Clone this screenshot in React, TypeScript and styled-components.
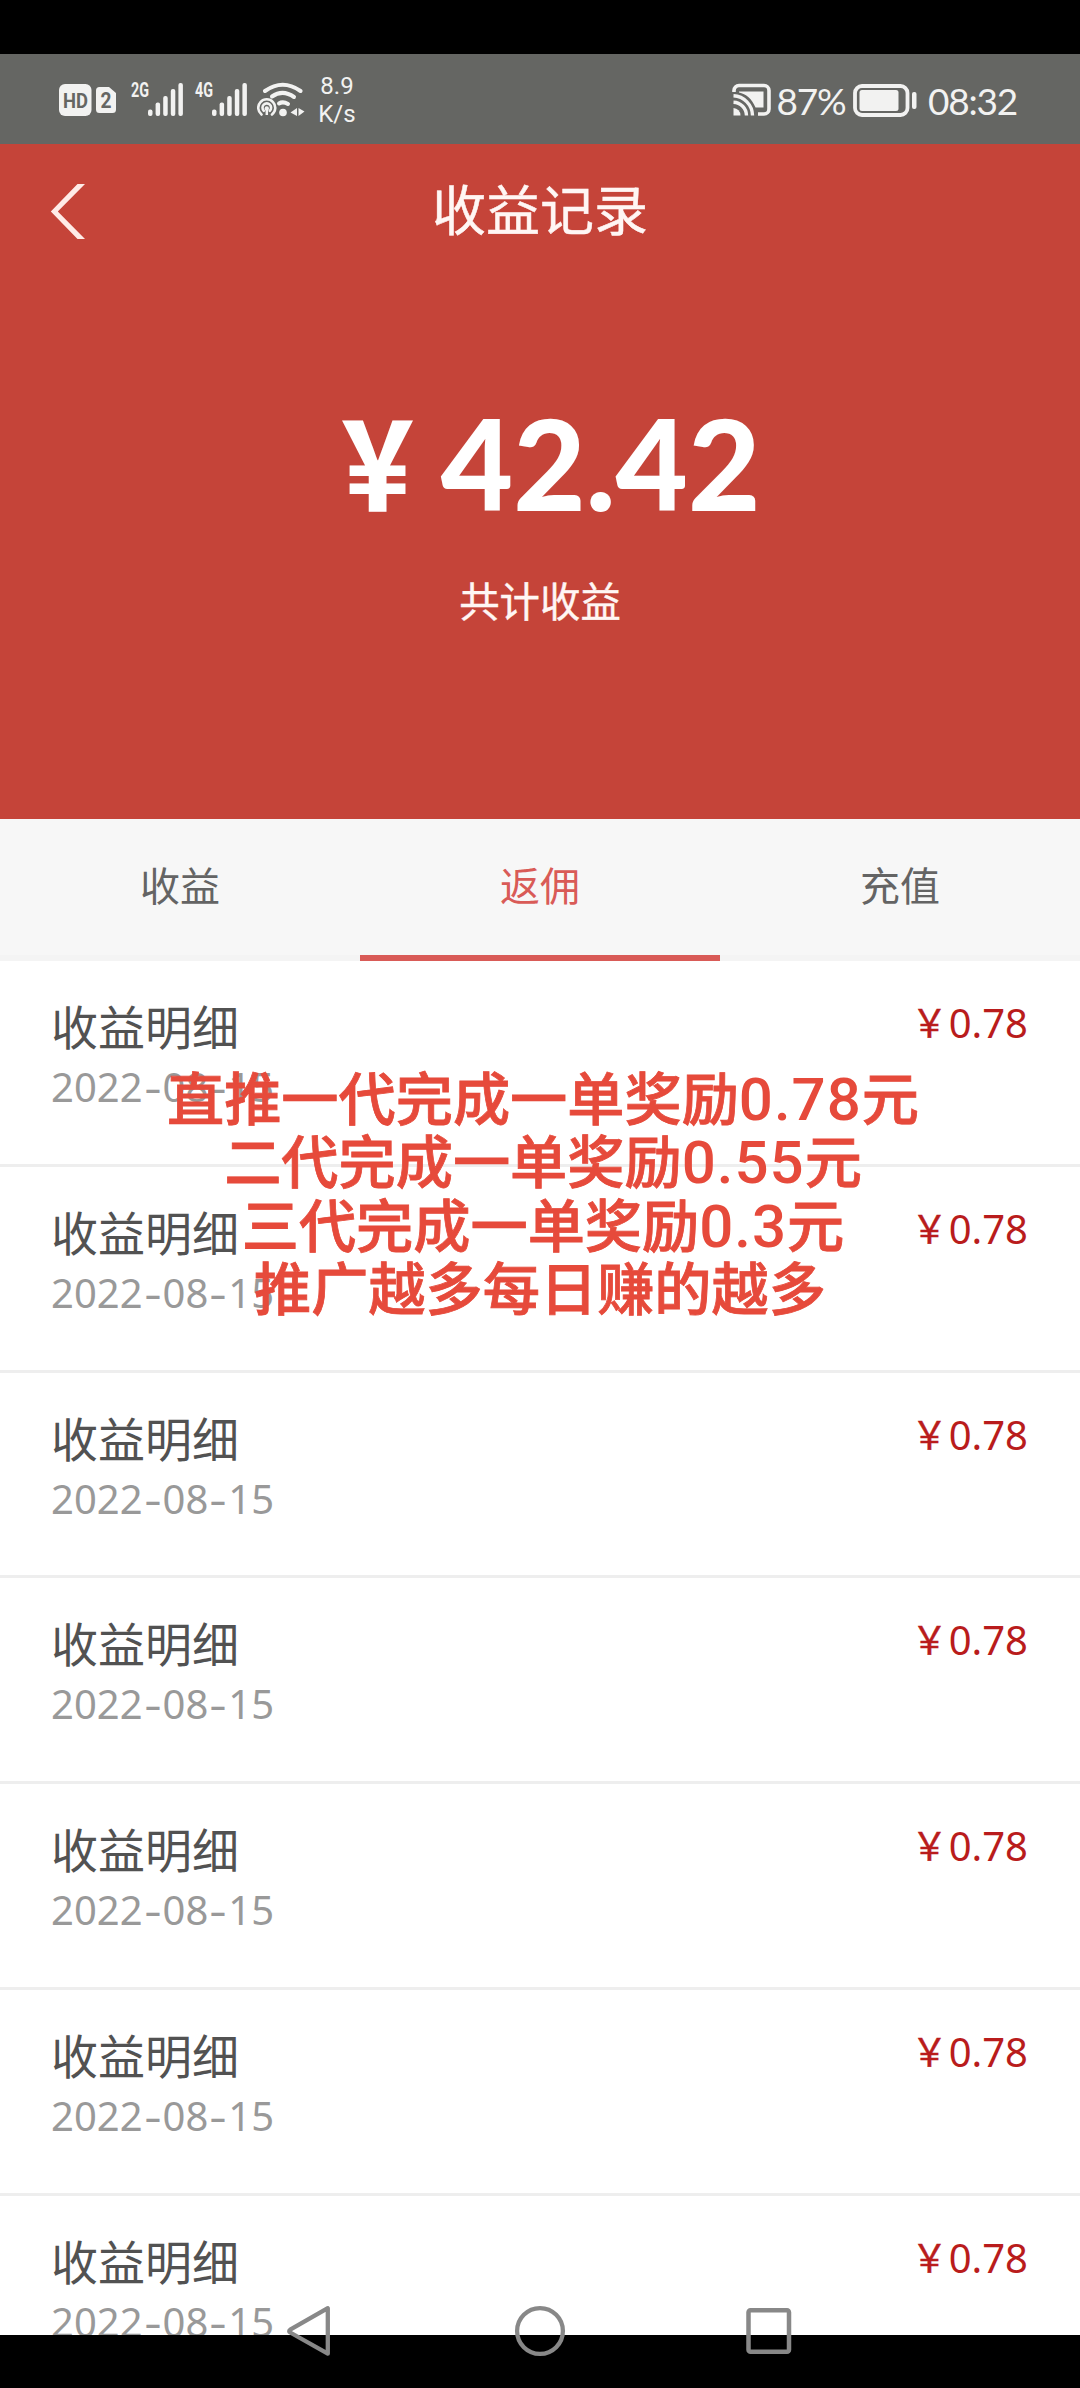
import React from "react";
import styled, { createGlobalStyle } from "styled-components";

const CJK = `"Noto Sans CJK SC", sans-serif`;

const Global = createGlobalStyle`
  * { box-sizing: border-box; }
  html, body { margin: 0; padding: 0; background: #000; }
  body { font-family: "Noto Sans", ${CJK}; }
`;

const Screen = styled.div`
  position: relative;
  display: flex;
  flex-direction: column;
  width: 1080px;
  height: 2388px;
  padding: 54px 0 53px;
  overflow: hidden;
  background: #000;
`;

const StatusBar = styled.div`
  display: flex;
  align-items: center;
  flex: none;
  height: 90px;
  padding: 0 57px 0 56px;
  background: #656663;
  color: #f2f2f1;
`;

const StatusIcon = styled.svg<{ $gap?: number; $drop?: number }>`
  display: block;
  flex: none;
  margin-top: ${(p) => p.$drop ?? 0}px;
  margin-right: ${(p) => p.$gap ?? 0}px;
`;

const Speed = styled.div`
  display: flex;
  flex-direction: column;
  width: 40px;
  margin: 1px 0 0 10px;
  text-align: center;
  font: 400 24px/28px Roboto, sans-serif;
`;

const Spacer = styled.div`
  flex: 1;
`;

const StatusText = styled.div<{ $width: number }>`
  width: ${(p) => p.$width}px;
  text-align: center;
  white-space: nowrap;
  font: 400 37px/44px Lato, sans-serif;
  letter-spacing: -1.2px;
  margin-top: 3px;
`;

const Hero = styled.header`
  display: flex;
  flex-direction: column;
  align-items: center;
  flex: none;
  height: 675px;
  background: #c54439;
  color: #fff6f4;
`;

const TitleBar = styled.div`
  display: grid;
  grid-template-columns: 96px 1fr 96px;
  align-items: center;
  width: 100%;
  height: 134px;
`;

const BackButton = styled.button`
  display: flex;
  height: 60px;
  padding: 0 0 0 48px;
  border: 0;
  background: none;
`;

const Title = styled.h1`
  margin: 0 0 6px;
  text-align: center;
  font: 400 54px/80px ${CJK};
  -webkit-text-stroke: 0.5px #fff6f4;
`;

const Total = styled.div`
  display: flex;
  align-items: baseline;
  margin-top: 91px;
  color: #fff;
  font: 900 125px/180px Lato, ${CJK};
`;

const TotalSign = styled.span`
  display: inline-block;
  transform: translateX(-3px) scaleX(0.82);
  font-family: ${CJK};
  font-size: 121px;
  font-weight: 900;
`;

const TotalLabel = styled.div`
  margin-top: 17px;
  font: 400 40.4px/60px ${CJK};
  -webkit-text-stroke: 0.4px #fff6f4;
`;

const Tabs = styled.nav`
  display: grid;
  grid-template-columns: repeat(3, 1fr);
  flex: none;
  height: 142px;
  background: #f7f7f7;
`;

const Tab = styled.div<{ $active?: boolean }>`
  display: flex;
  align-items: center;
  justify-content: center;
  padding-bottom: 6px;
  border-bottom: 6px solid ${(p) => (p.$active ? "#d95b57" : "#f4f4f4")};
  color: ${(p) => (p.$active ? "#d95b57" : "#646464")};
  font: 400 40px/60px ${CJK};
`;

const List = styled.main`
  flex: 1;
  min-height: 0;
  overflow: hidden;
  background: #fff;
`;

const Row = styled.div`
  display: flex;
  justify-content: space-between;
  height: 205.8px;
  padding: 29px 52px 0 51px;
  border-bottom: 3px solid #eee;
`;

const RowTitle = styled.div`
  color: #525252;
  font: 400 47px/70px ${CJK};
`;

const RowDate = styled.div`
  margin-top: -1px;
  color: #999;
  font: 400 40px/56px "Noto Sans", sans-serif;
`;

const Dash = styled.span`
  display: inline-block;
  width: 20px;
  text-align: center;
  transform: scaleX(1.35);
`;

const Amount = styled.div`
  margin-top: 3px;
  color: #b91c1c;
  font: 400 40px/60px "Noto Sans", ${CJK};
`;

const AmountSign = styled.span`
  display: inline-block;
  transform: translateY(-1px) scaleX(0.92);
  font-size: 39px;
  line-height: 1;
  font-family: ${CJK};
  -webkit-text-stroke: 0.5px #b91c1c;
`;

const Notice = styled.div`
  position: absolute;
  top: 1064px;
  left: 143px;
  width: 800px;
`;

const NoticeLine = styled.div<{ $shift?: number }>`
  height: 63.3px;
  margin-left: ${(p) => p.$shift ?? 0}px;
  text-align: center;
  white-space: nowrap;
  color: #e64a3b;
  font: 500 57.2px/63.3px ${CJK};
  -webkit-text-stroke: 0.8px #e64a3b;
`;

const NoticeNumber = styled.span`
  font-family: Roboto, sans-serif;
  font-size: 60px;
  font-weight: 500;
  line-height: 1;
  letter-spacing: 1px;
  -webkit-text-stroke: 0;
`;

const NavKeys = styled.div`
  position: absolute;
  left: 0;
  bottom: 29px;
  display: flex;
  justify-content: space-between;
  width: 100%;
  padding: 0 283px;
`;

const Signal = ({ label, gap }: { label: string; gap: number }) => (
  <StatusIcon $gap={gap} width="56" height="40" viewBox="0 0 56 40">
    <text x="1" y="18" fontFamily="Roboto" fontWeight="700" fontSize="20" textLength="18" lengthAdjust="spacingAndGlyphs" fill="#f2f2f1">
      {label}
    </text>
    {[30.5, 23.5, 17, 10, 4].map((y, i) => (
      <rect key={i} x={18 + i * 7.6} y={y} width="4.5" height={37 - y} rx="2" fill="#f2f2f1" />
    ))}
  </StatusIcon>
);

const records = Array.from({ length: 7 }, () => ({ title: "收益明细", date: ["2022", "08", "15"], amount: "0.78" }));

const notices: { before: string; value?: string; after?: string; shift?: number }[] = [
  { before: "直推一代完成一单奖励", value: "0.78", after: "元" },
  { before: "二代完成一单奖励", value: "0.55", after: "元" },
  { before: "三代完成一单奖励", value: "0.3", after: "元" },
  { before: "推广越多每日赚的越多", shift: -6 },
];

export default function App() {
  return (
    <>
      <Global />
      <Screen>
        <StatusBar>
          <StatusIcon width="74" height="40" viewBox="0 0 74 40">
            <rect x="3" y="5" width="32.5" height="32" rx="6" fill="#f2f2f1" />
            <text x="7" y="28.500" fontFamily="Roboto" fontWeight="700" fontSize="20.5" textLength="25" lengthAdjust="spacingAndGlyphs" fill="#656663">HD</text>
            <path d="M43.5 8H53l7 6v16.500a3.500 3.500 0 0 1-3.500 3.500h-13a3.500 3.500 0 0 1-3.500-3.500v-19a3.500 3.500 0 0 1 3.500-3.500Z" fill="#f2f2f1" />
            <text x="44.500" y="29" fontFamily="Roboto" fontWeight="700" fontSize="22" textLength="11" lengthAdjust="spacingAndGlyphs" fill="#656663">2</text>
          </StatusIcon>
          <Signal label="2G" gap={8} />
          <Signal label="4G" gap={7} />
          <StatusIcon width="50" height="40" viewBox="0 0 50 40" fill="none" stroke="#f2f2f1">
            <g strokeWidth="4" strokeLinecap="round">
              <path d="M8 12Q25.700-.5 43.500 12" />
              <path d="M15 17.500Q25.700 10 37 18" />
              <path d="M22 24.500Q26 22 31 25" />
            </g>
            <g strokeWidth="2.600" strokeLinecap="round">
              <path d="M4.500 35.500a8.500 8.500 0 1 1 10.500 0" />
              <path d="M6.800 31.800a4.300 4.300 0 1 1 6 0" />
            </g>
            <circle cx="9.800" cy="29.500" r="2.200" fill="#f2f2f1" stroke="none" />
            <path d="M9.800 30v6" strokeWidth="2.500" />
            <circle cx="26" cy="33.500" r="3.800" fill="#f2f2f1" stroke="none" />
            <path d="M40 29v8l-6.500-3.500ZM41.500 29l6 3.500-6 4.500Z" fill="#f2f2f1" stroke="none" />
          </StatusIcon>
          <Speed>
            <span>8.9</span>
            <span>K/s</span>
          </Speed>
          <Spacer />
          <StatusIcon $drop={2} width="40" height="36" viewBox="0 0 40 36" fill="none" stroke="#f2f2f1">
            <path d="M2 10V8.500a5 5 0 0 1 5-5h25a5 5 0 0 1 5 5v18.500a5 5 0 0 1-5 5h-6" strokeWidth="3.600" />
            <path d="M7 9.500h24.500v16h-8C20 17 14 11.800 7 10.500Z" fill="#f2f2f1" stroke="none" />
            <path d="M1.500 13.800A20 20 0 0 1 20.500 33.500M1.500 20.200A13.500 13.500 0 0 1 14.500 33.500" strokeWidth="3.400" />
            <path d="M1.500 26a7.500 7.500 0 0 1 7 7.500h-7Z" fill="#f2f2f1" stroke="none" />
          </StatusIcon>
          <StatusText $width={78}>87%</StatusText>
          <StatusIcon $drop={3} width="72" height="38" viewBox="0 0 72 38">
            <rect x="5" y="4" width="52.500" height="29" rx="7" fill="none" stroke="#f2f2f1" strokeWidth="3.800" />
            <rect x="9.500" y="8" width="39" height="21" rx="2.500" fill="#f2f2f1" />
            <rect x="62" y="10" width="4.500" height="17" rx="2" fill="#f2f2f1" />
          </StatusIcon>
          <StatusText $width={101}>08:32</StatusText>
        </StatusBar>

        <Hero>
          <TitleBar>
            <BackButton aria-label="返回">
              <svg width="40" height="60" viewBox="0 0 40 60">
                <path d="M29.500 3H37L9.800 30.500 37 58H29.500L2.800 30.500Z" fill="#ffebe7" />
              </svg>
            </BackButton>
            <Title>收益记录</Title>
          </TitleBar>
          <Total>
            <TotalSign>￥</TotalSign>
            42.42
          </Total>
          <TotalLabel>共计收益</TotalLabel>
        </Hero>

        <Tabs>
          <Tab>收益</Tab>
          <Tab $active>返佣</Tab>
          <Tab>充值</Tab>
        </Tabs>

        <List>
          {records.map((r, i) => (
            <Row key={i}>
              <div>
                <RowTitle>{r.title}</RowTitle>
                <RowDate>
                  {r.date[0]}
                  <Dash>-</Dash>
                  {r.date[1]}
                  <Dash>-</Dash>
                  {r.date[2]}
                </RowDate>
              </div>
              <Amount>
                <AmountSign>￥</AmountSign>
                {r.amount}
              </Amount>
            </Row>
          ))}
        </List>

        <Notice>
          {notices.map((n) => (
            <NoticeLine key={n.before} $shift={n.shift}>
              {n.before}
              {n.value && <NoticeNumber>{n.value}</NoticeNumber>}
              {n.after}
            </NoticeLine>
          ))}
        </Notice>

        <NavKeys>
          <svg width="52" height="56" viewBox="0 0 52 56" fill="none" stroke="#888" strokeWidth="4.300" strokeLinejoin="round">
            <path d="M44.800 5.200v45.500L7.200 29.500q-2-1.300 0-2.800Z" />
          </svg>
          <svg width="56" height="56" viewBox="0 0 56 56" fill="none" stroke="#888" strokeWidth="4.300">
            <circle cx="28" cy="28" r="22.900" />
          </svg>
          <svg width="52" height="56" viewBox="0 0 52 56" fill="none" stroke="#888" strokeWidth="4.500">
            <rect x="3.500" y="7.200" width="40.500" height="41.500" rx="2" />
          </svg>
        </NavKeys>
      </Screen>
    </>
  );
}
